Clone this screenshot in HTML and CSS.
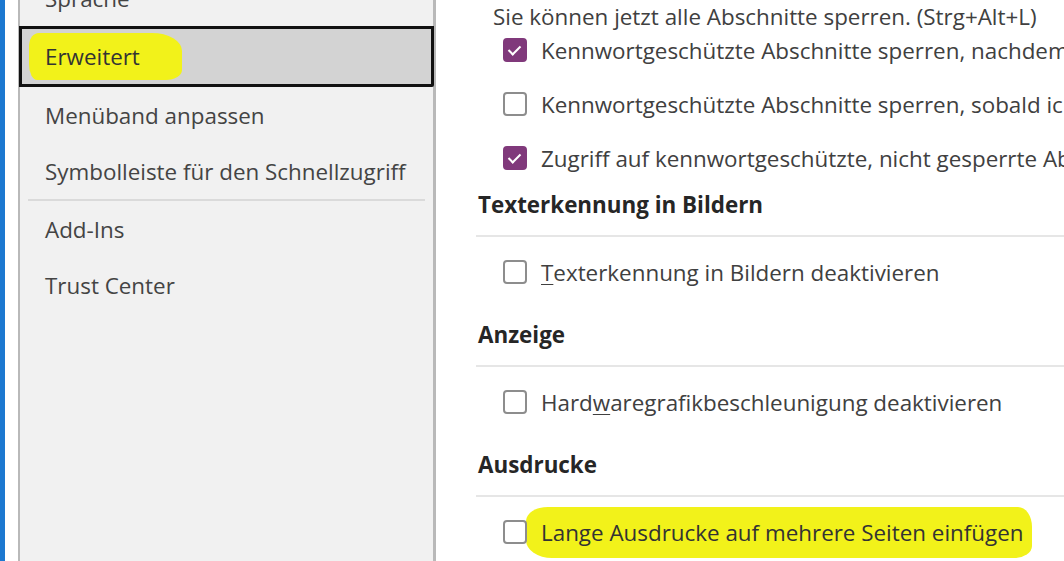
FILE: index.html
```html
<!DOCTYPE html>
<html>
<head>
 <meta charset="UTF-8">
 <title>Optionen - Erweitert</title>
 <link rel="stylesheet" href="styles.css">
</head>
<body>
<div class="win">
  <div class="edge"></div>
  <div class="gutter"></div>
  <ul class="nav">
    <li>Sprache</li>
    <li class="sel"><span class="mark mark-nav">Erweitert</span></li>
    <li>Menüband anpassen</li>
    <li>Symbolleiste für den Schnellzugriff</li>
    <li class="sep"></li>
    <li>Add-Ins</li>
    <li>Trust Center</li>
  </ul>
  <div class="main">
    <div class="note">Sie können jetzt alle Abschnitte sperren. (Strg+Alt+L)</div>
    <div class="checks top">
      <label class="row"><span class="box on"></span>Kennwortgeschützte Abschnitte sperren, nachdem ich für folgende Zeit nicht damit gearbeitet habe:</label>
      <label class="row"><span class="box"></span>Kennwortgeschützte Abschnitte sperren, sobald ich sie verlasse</label>
      <label class="row"><span class="box on"></span>Zugriff auf kennwortgeschützte, nicht gesperrte Abschnitte für Add-In-Programme zulassen</label>
    </div>
    <h3>Texterkennung in Bildern</h3>
    <div class="checks">
      <label class="row"><span class="box"></span><span><u>T</u>exterkennung in Bildern deaktivieren</span></label>
    </div>
    <h3>Anzeige</h3>
    <div class="checks">
      <label class="row"><span class="box"></span><span>Hard<u>w</u>aregrafikbeschleunigung deaktivieren</span></label>
    </div>
    <h3>Ausdrucke</h3>
    <div class="checks">
      <label class="row"><span class="box"></span><span class="mark mark-row">Lange Ausdrucke auf mehrere Seiten einfügen</span></label>
    </div>
  </div>
</div>
</body>
</html>
```

FILE: styles.css
```css
html, body { margin: 0; height: 100%; overflow: hidden; background: #fff; }
body { font-family: "Open Sans", "Noto Sans", sans-serif; font-size: 22.4px;
  color: #444; }
.win { display: flex; height: 561px; overflow: hidden; }
.edge { width: 5px; background: #1c78d0; flex: none; }
.gutter { width: 13px; flex: none; }

.nav { list-style: none; margin: -30px 0 0 0; padding: 0; width: 413px;
  flex: none; background: #f1f1f1; border: 2px solid #b9b9b9;
  border-width: 0 3px 0 2px; height: 591px; }
.nav li { height: 56px; display: flex; align-items: center;
  padding-left: 25px; white-space: nowrap; }
.nav li.sel { height: 55px; background: #d3d3d3; border: 3px solid #111;
  margin-left: -1px; margin-right: -1px; padding-left: 23px;
  border-radius: 0 0 2px 0; }
.nav li.sep { height: 0; border-top: 2px solid #dadada; margin: 0 8px;
  padding: 0; }

.main { flex: 1; padding-left: 42px; min-width: 0; white-space: nowrap;
  overflow: hidden; color: #404040; }
.note { line-height: 24px; padding: 5px 0 0 15px; }
.checks.top { margin-top: -6px; margin-bottom: -16px; }
.row { display: flex; align-items: center; height: 54px; padding-left: 25px; }
.box { width: 20px; height: 20px; border: 2px solid #8d8d8d;
  border-radius: 4px; background: #fff; margin-right: 14px; flex: none;
  position: relative; }
.box.on { background: #80397b; border-color: #80397b; }
.box.on::after { content: ""; position: absolute; left: 6px; top: 3px;
  width: 5px; height: 10px; border: solid #fff; border-width: 0 2px 2px 0;
  transform: rotate(45deg); }
h3 { font-size: 22.4px; font-weight: 700; color: #262626; margin: 21px 0 8px -2px;
  line-height: 30px; padding: 0 0 15px 2px; border-bottom: 2px solid #e6e6e6; }
u { text-decoration-thickness: 1px; text-underline-offset: 3px; }

.mark { background: #f2f21a; }
.mark-nav { padding: 8px 42px 8px 16px; margin: 0 -42px 0 -16px;
  border-radius: 10px 30px 16px 8px / 12px 18px 10px 16px; color: #333; }
.mark-row { padding: 10px 8px 10px 15px; margin: 0 -8px 0 -15px;
  border-radius: 22px 14px 18px 26px / 14px 20px 12px 18px; color: #333; }
```
